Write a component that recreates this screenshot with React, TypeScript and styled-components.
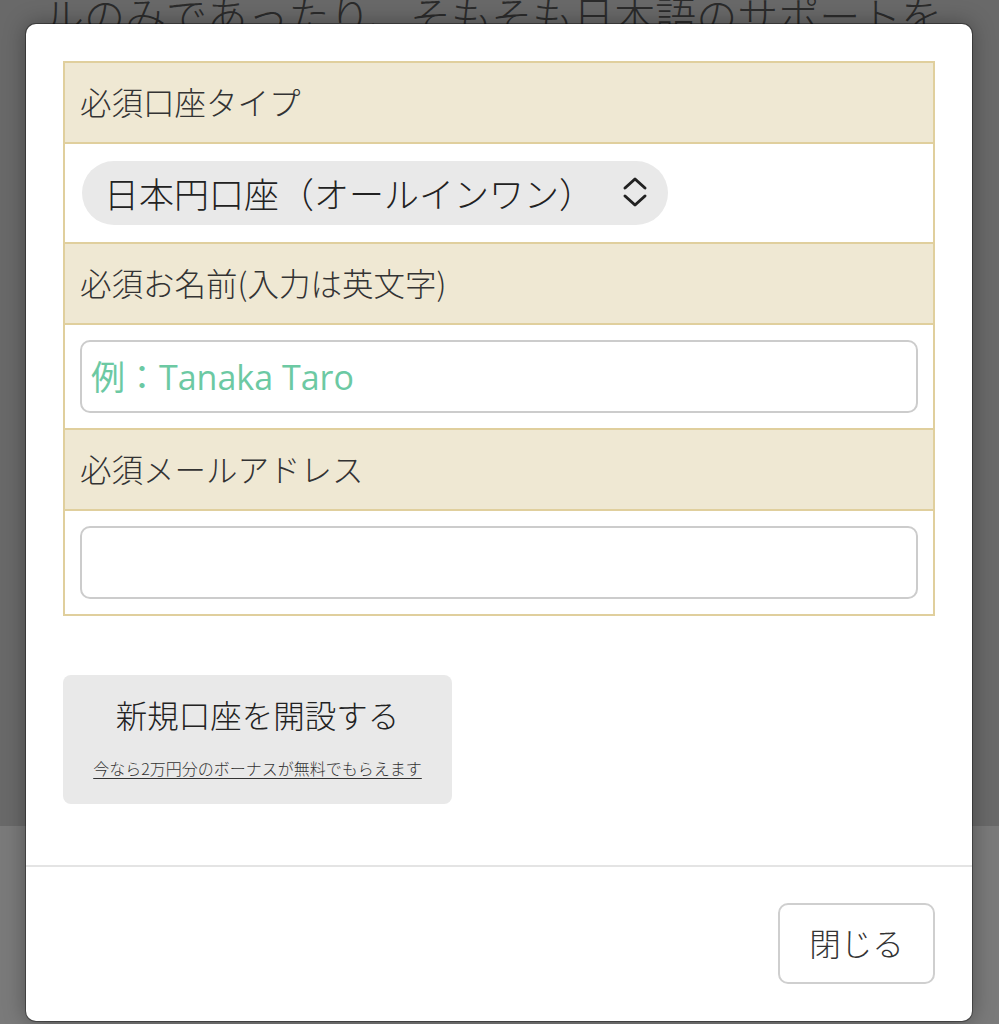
import React, { FC } from 'react';
import styled, { createGlobalStyle } from 'styled-components';

const font = `"Noto Sans CJK JP", "Noto Sans", sans-serif`;
const latinFont = `"Open Sans", "Noto Sans CJK JP", sans-serif`;

const GlobalStyle = createGlobalStyle`
  html, body {
    margin: 0;
    padding: 0;
    height: 1024px;
    overflow: hidden;
    background: #6b6b6b;
  }
  * {
    box-sizing: border-box;
  }
`;

const Page = styled.div`
  position: relative;
  display: flex;
  flex-direction: column;
  height: 1024px;
  font-family: ${font};
  font-weight: 300;
`;

const Behind = styled.div`
  height: 826px;
  background: #696969;
  overflow: hidden;
`;

const BehindLower = styled.div`
  flex: 1;
  background: #7a7a7a;
`;

const BehindText = styled.p`
  margin: -6px 0 0 43px;
  font-size: 41px;
  line-height: 1;
  color: #2b2b2b;
  white-space: nowrap;
`;

const Modal = styled.div`
  position: absolute;
  top: 24px;
  left: 26px;
  width: 946px;
  height: 997px;
  background: #fff;
  border-radius: 10px;
  box-shadow: 0 0 0 1px rgba(0, 0, 0, 0.35), 0 0 22px rgba(0, 0, 0, 0.35);
  display: flex;
  flex-direction: column;
  overflow: hidden;
`;

const ModalBody = styled.div`
  padding: 37px 37px 61px;
  border-bottom: 2px solid #e4e4e4;
`;

const FormTable = styled.div`
  border: 2px solid #e0cf9d;
  display: flex;
  flex-direction: column;
`;

const LabelCell = styled.div`
  height: 81px;
  background: #efe8d3;
  border-bottom: 2px solid #e0cf9d;
  display: flex;
  align-items: center;
  padding: 0 0 4px 15px;
  font-size: 31.5px;
  color: #333;
`;

const FieldCell = styled.div<{ $last?: boolean }>`
  padding: 15px 15px;
  border-bottom: ${(p) => (p.$last ? 'none' : '2px solid #e0cf9d')};
  display: flex;
  align-items: center;
`;

const SelectRow = styled(FieldCell)`
  padding: 17px 17px;
`;

const SelectPill = styled.div`
  width: 586px;
  height: 64px;
  border-radius: 32px;
  background: #e9e9e9;
  display: flex;
  align-items: center;
  justify-content: space-between;
  padding: 0 20px 2px 22px;
  font-size: 35px;
  color: #222;
`;

const TextInput = styled.div`
  width: 100%;
  height: 73px;
  border: 2px solid #cccccc;
  border-radius: 10px;
  display: flex;
  align-items: center;
  padding: 0 0 2px 9px;
  font-family: ${latinFont};
  font-weight: 400;
  font-size: 34px;
  color: #6cc9a3;
`;

const OpenButton = styled.div`
  margin-top: 59px;
  width: 389px;
  height: 129px;
  background: #e9e9e9;
  border-radius: 8px;
  display: flex;
  flex-direction: column;
  align-items: center;
  padding-top: 17px;
`;

const OpenTitle = styled.div`
  font-size: 31.5px;
  line-height: 44px;
  color: #222;
`;

const OpenNote = styled.div`
  margin-top: 22px;
  font-size: 16px;
  line-height: 20px;
  color: #333;
  text-decoration: underline;
  text-underline-offset: 3px;
`;

const Footer = styled.div`
  display: flex;
  justify-content: flex-end;
  padding: 36px 37px 37px;
`;

const CloseButton = styled.div`
  width: 157px;
  height: 81px;
  border: 2px solid #cfcfcf;
  border-radius: 10px;
  display: flex;
  align-items: center;
  justify-content: center;
  font-size: 31.5px;
  color: #333;
  padding-bottom: 3px;
`;

const Chevrons: FC = () => (
  <svg width="26" height="32" viewBox="0 0 26 32" fill="none" stroke="#222" strokeWidth="3" strokeLinecap="round" strokeLinejoin="round">
    <path d="M3 12 L13 3 L23 12" />
    <path d="M3 20 L13 29 L23 20" />
  </svg>
);

const App: FC = () => {
  return (
    <>
      <GlobalStyle />
      <Page>
        <Behind>
          <BehindText>ルのみであったり、そもそも日本語のサポートを</BehindText>
        </Behind>
        <BehindLower />
        <Modal>
          <ModalBody>
            <FormTable>
              <LabelCell>必須口座タイプ</LabelCell>
              <SelectRow>
                <SelectPill>
                  <span>日本円口座（オールインワン）</span>
                  <Chevrons />
                </SelectPill>
              </SelectRow>
              <LabelCell>必須お名前(入力は英文字)</LabelCell>
              <FieldCell>
                <TextInput>例：Tanaka Taro</TextInput>
              </FieldCell>
              <LabelCell>必須メールアドレス</LabelCell>
              <FieldCell $last>
                <TextInput />
              </FieldCell>
            </FormTable>
            <OpenButton>
              <OpenTitle>新規口座を開設する</OpenTitle>
              <OpenNote>今なら2万円分のボーナスが無料でもらえます</OpenNote>
            </OpenButton>
          </ModalBody>
          <Footer>
            <CloseButton>閉じる</CloseButton>
          </Footer>
        </Modal>
      </Page>
    </>
  );
};

export default App;
